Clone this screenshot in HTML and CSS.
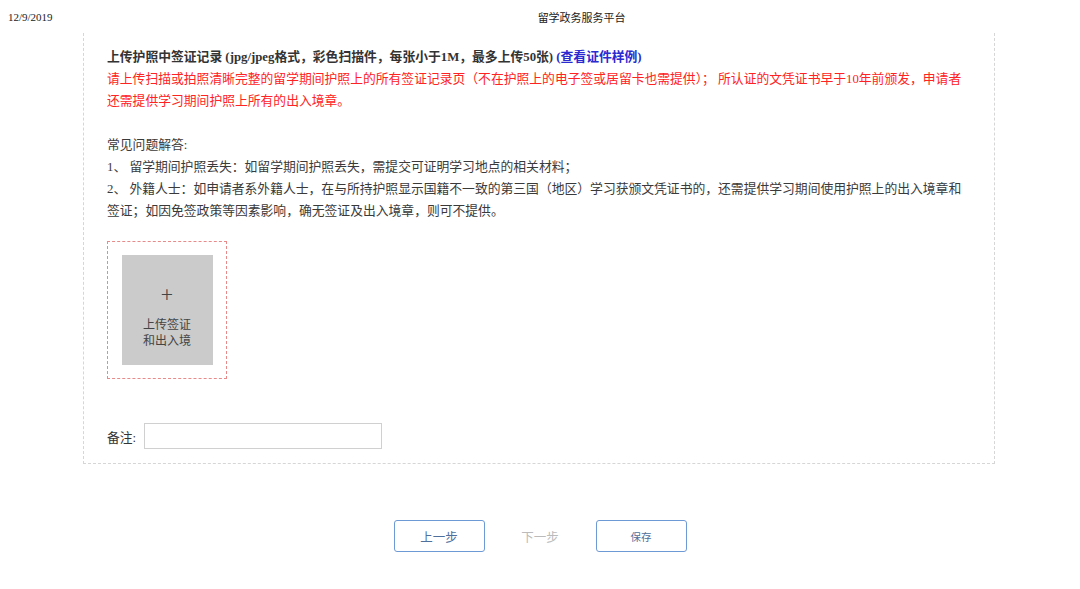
FILE: index.html
```html
<!DOCTYPE html>
<html>
<head>
  <meta charset="utf-8">
  <link rel="stylesheet" href="styles.css">
</head>
<body>
  <div class="print-header">
    <span class="print-date">12/9/2019</span>
    <span class="print-title">留学政务服务平台</span>
  </div>

  <div class="form-box">
    <p class="upload-tip">
      <span class="tip-title">上传护照中签证记录 (jpg/jpeg格式，彩色扫描件，每张小于1M，最多上传50张) <a class="sample-link">(查看证件样例)</a></span><br>
      <span class="tip-warn">请上传扫描或拍照清晰完整的留学期间护照上的所有签证记录页（不在护照上的电子签或居留卡也需提供）； 所认证的文凭证书早于10年前颁发，申请者<br>还需提供学习期间护照上所有的出入境章。</span>
    </p>

    <p class="faq">
      常见问题解答:<br>
      1、 留学期间护照丢失：如留学期间护照丢失，需提交可证明学习地点的相关材料；<br>
      2、 外籍人士：如申请者系外籍人士，在与所持护照显示国籍不一致的第三国（地区）学习获颁文凭证书的，还需提供学习期间使用护照上的出入境章和<br>
      签证；如因免签政策等因素影响，确无签证及出入境章，则可不提供。
    </p>

    <div class="upload-area">
      <div class="upload-btn">
        <span class="upload-plus">+</span>
        <span class="upload-text">上传签证<br>和出入境</span>
      </div>
    </div>

    <div class="remark-row">
      <label for="remark">备注:</label>
      <input type="text" id="remark">
    </div>
  </div>

  <div class="step-buttons">
    <button class="step-button">上一步</button>
    <button class="step-button disabled">下一步</button>
    <button class="step-button small">保存</button>
  </div>
</body>
</html>
```

FILE: styles.css
```css
body {
  margin: 0;
  font-family: 'Liberation Serif', 'Noto Sans CJK SC', serif;
  color: #333;
  background: #fff;
}
.print-header {
  display: flex;
  align-items: center;
  height: 33px;
  padding-left: 8px;
  font-size: 11px;
  color: #222;
}
.print-title {
  margin-left: 485px;
}
.form-box {
  margin-left: 83px;
  width: 887px;
  padding: 13px 0 14px 23px;
  border-left: 1px dashed #d6d6d6;
  border-right: 1px dashed #d6d6d6;
  border-bottom: 1px dashed #d6d6d6;
}
.upload-tip,
.faq {
  margin: 0 0 22px 0;
  font-size: 12.8px;
  line-height: 22px;
  white-space: nowrap;
}
.faq {
  margin-bottom: 19px;
  color: #3a3a3a;
}
.tip-title {
  font-weight: bold;
  color: #333;
}
.sample-link {
  color: #2a2ad0;
  cursor: pointer;
}
.tip-warn {
  color: #ff2222;
}
.upload-area {
  width: 118px;
  height: 136px;
  border: 1px dashed #e88a8a;
  display: flex;
  align-items: center;
  justify-content: center;
}
.upload-btn {
  width: 91px;
  height: 110px;
  background: #cbcbcb;
  display: flex;
  flex-direction: column;
  align-items: center;
  justify-content: center;
  color: #444;
  font-family: 'Noto Sans CJK SC', sans-serif;
  cursor: pointer;
}
.upload-plus {
  font-size: 22px;
  line-height: 22px;
  font-weight: 300;
  margin-top: 10px;
  margin-bottom: 12px;
}
.upload-text {
  font-size: 12px;
  line-height: 16px;
  text-align: center;
}
.remark-row {
  display: flex;
  align-items: center;
  gap: 8px;
  margin-top: 44px;
  font-size: 12.8px;
}
.remark-row input {
  width: 236px;
  height: 24px;
  padding: 0;
  border: 1px solid #d0d0d0;
  box-sizing: content-box;
}
.step-buttons {
  display: flex;
  justify-content: center;
  gap: 10px;
  margin-top: 56px;
}
.step-button {
  width: 91px;
  height: 32px;
  border: 1px solid #6d9ad4;
  border-radius: 3px;
  background: #fff;
  color: #4f6f9c;
  font-family: 'Liberation Serif', 'Noto Sans CJK SC', serif;
  font-size: 12.5px;
  cursor: pointer;
}
.step-button.disabled {
  border-color: transparent;
  color: #bbb;
  cursor: default;
}
.step-button.small {
  font-family: 'Noto Sans CJK SC', sans-serif;
  font-size: 10.5px;
}
```
